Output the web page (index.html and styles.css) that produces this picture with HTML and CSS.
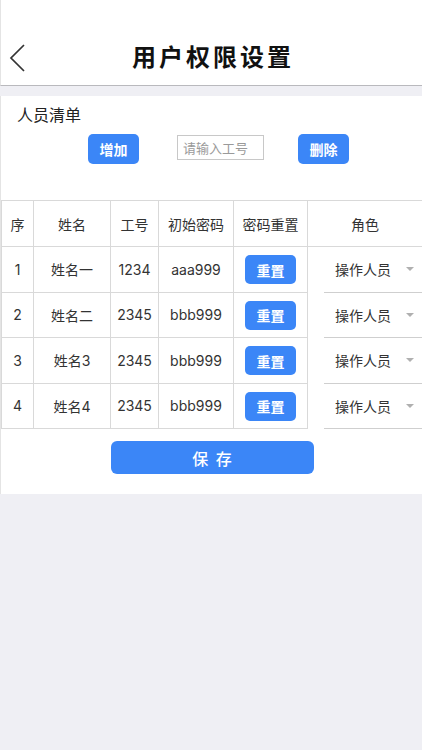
FILE: index.html
```html
<!DOCTYPE html>
<html lang="zh-CN">
<head>
<meta charset="utf-8">
<title>用户权限设置</title>
<link rel="stylesheet" href="styles.css">
</head>
<body>
<header class="nav">
  <button class="back" aria-label="返回">
    <svg width="16" height="28" viewBox="0 0 16 28"><polyline points="15,1 2,14 15,27" fill="none" stroke="#333" stroke-width="1.7"/></svg>
  </button>
  <h1 class="title">用户权限设置</h1>
</header>
<main class="panel">
  <div class="section-title">人员清单</div>
  <div class="toolbar">
    <button class="btn btn-add">增加</button>
    <input class="id-input" type="text" placeholder="请输入工号">
    <button class="btn btn-del">删除</button>
  </div>
  <div class="grid">
    <div class="cell head">序</div>
    <div class="cell head">姓名</div>
    <div class="cell head">工号</div>
    <div class="cell head">初始密码</div>
    <div class="cell head">密码重置</div>
    <div class="cell head last">角色</div>

    <div class="cell">1</div>
    <div class="cell">姓名一</div>
    <div class="cell">1234</div>
    <div class="cell">aaa999</div>
    <div class="cell"><button class="btn btn-reset">重置</button></div>
    <div class="cell role"><div class="picker"><span>操作人员</span><i class="caret"></i></div></div>

    <div class="cell">2</div>
    <div class="cell">姓名二</div>
    <div class="cell">2345</div>
    <div class="cell">bbb999</div>
    <div class="cell"><button class="btn btn-reset">重置</button></div>
    <div class="cell role"><div class="picker"><span>操作人员</span><i class="caret"></i></div></div>

    <div class="cell">3</div>
    <div class="cell">姓名3</div>
    <div class="cell">2345</div>
    <div class="cell">bbb999</div>
    <div class="cell"><button class="btn btn-reset">重置</button></div>
    <div class="cell role"><div class="picker"><span>操作人员</span><i class="caret"></i></div></div>

    <div class="cell">4</div>
    <div class="cell">姓名4</div>
    <div class="cell">2345</div>
    <div class="cell">bbb999</div>
    <div class="cell"><button class="btn btn-reset">重置</button></div>
    <div class="cell role"><div class="picker"><span>操作人员</span><i class="caret"></i></div></div>
  </div>
  <div class="save-row">
    <button class="btn btn-save">保 存</button>
  </div>
</main>
</body>
</html>
```
FILE: styles.css
```css
* { box-sizing: border-box; }
html, body {
  margin: 0;
  padding: 0;
}
body {
  background: #efeff4;
  font-family: Inter, "Noto Sans CJK SC", sans-serif;
  color: #333;
  width: 422px;
  min-height: 750px;
}
.nav {
  height: 86px;
  background: #fff;
  border-bottom: 1px solid #b9b9bd;
  border-left: 1px solid #e4e4e4;
  display: flex;
  align-items: center;
  justify-content: center;
  position: relative;
}
.back {
  position: absolute;
  left: 8px;
  top: 44px;
  padding: 0;
  border: 0;
  background: none;
  line-height: 0;
}
.title {
  margin: 25px 0 0 0;
  font-family: "Noto Sans CJK SC", sans-serif;
  font-size: 24px;
  font-weight: 700;
  letter-spacing: 3px;
  padding-left: 3px;
  color: #111;
}
.panel {
  margin-top: 10px;
  background: #fff;
  border-left: 1px solid #e4e4e4;
  padding-bottom: 20px;
}
.section-title {
  margin-top: 0;
  padding-top: 6px;
  padding-left: 16px;
  font-family: "Noto Sans CJK SC", sans-serif;
  font-size: 16px;
  line-height: 24px;
  color: #222;
}
.toolbar {
  display: flex;
  align-items: flex-start;
  margin-top: 8px;
  padding-left: 87px;
  height: 30px;
}
.btn {
  border: 0;
  background: #3b86f7;
  color: #fff;
  font-family: "Noto Sans CJK SC", sans-serif;
  cursor: pointer;
  padding: 0;
}
.btn-add, .btn-del {
  width: 51px;
  height: 30px;
  border-radius: 5px;
  font-size: 14px;
  font-weight: 700;
}
.id-input {
  width: 87px;
  height: 25px;
  margin: 1px 34px 0 38px;
  border: 1px solid #c8c8c8;
  padding: 0 5px;
  font-family: "Noto Sans CJK SC", sans-serif;
  font-size: 13px;
  color: #333;
  outline: none;
}
.id-input::placeholder { color: #9a9a9a; }
.grid {
  margin-top: 36px;
  display: grid;
  grid-template-columns: 32px 77px 48px 75px 74px 1fr;
  grid-template-rows: 46px repeat(4, 45.5px);
  border-top: 1px solid #d9d9d9;
  border-left: 1px solid #d9d9d9;
}
.cell {
  display: flex;
  align-items: center;
  justify-content: center;
  border-right: 1px solid #d9d9d9;
  border-bottom: 1px solid #d9d9d9;
  font-size: 14px;
  color: #333;
  font-family: Inter, "Noto Sans CJK SC", sans-serif;
}
.cell.head { font-family: "Noto Sans CJK SC", sans-serif; }
.cell.last { border-right: 0; }
.cell.role {
  border-right: 0;
  border-bottom: 0;
  align-items: stretch;
  justify-content: flex-start;
}
.picker {
  flex: 1;
  margin-left: 16px;
  border-bottom: 1px solid #cfcfcf;
  display: flex;
  align-items: center;
  justify-content: space-between;
  padding: 0 8px 0 11px;
  font-family: "Noto Sans CJK SC", sans-serif;
  font-size: 14px;
  color: #333;
}
.caret {
  width: 0;
  height: 0;
  border-left: 4px solid transparent;
  border-right: 4px solid transparent;
  border-top: 4px solid #b0b0b0;
}
.btn-reset {
  width: 51px;
  height: 29px;
  border-radius: 5px;
  font-size: 14px;
  font-weight: 700;
  margin-top: 1px;
}
.save-row {
  display: flex;
  justify-content: center;
  margin-top: 12px;
}
.btn-save {
  width: 203px;
  height: 33px;
  border-radius: 6px;
  font-size: 16px;
  font-weight: 500;
  letter-spacing: 2px;
  padding-left: 2px;
  margin-left: 1px;
}
```
